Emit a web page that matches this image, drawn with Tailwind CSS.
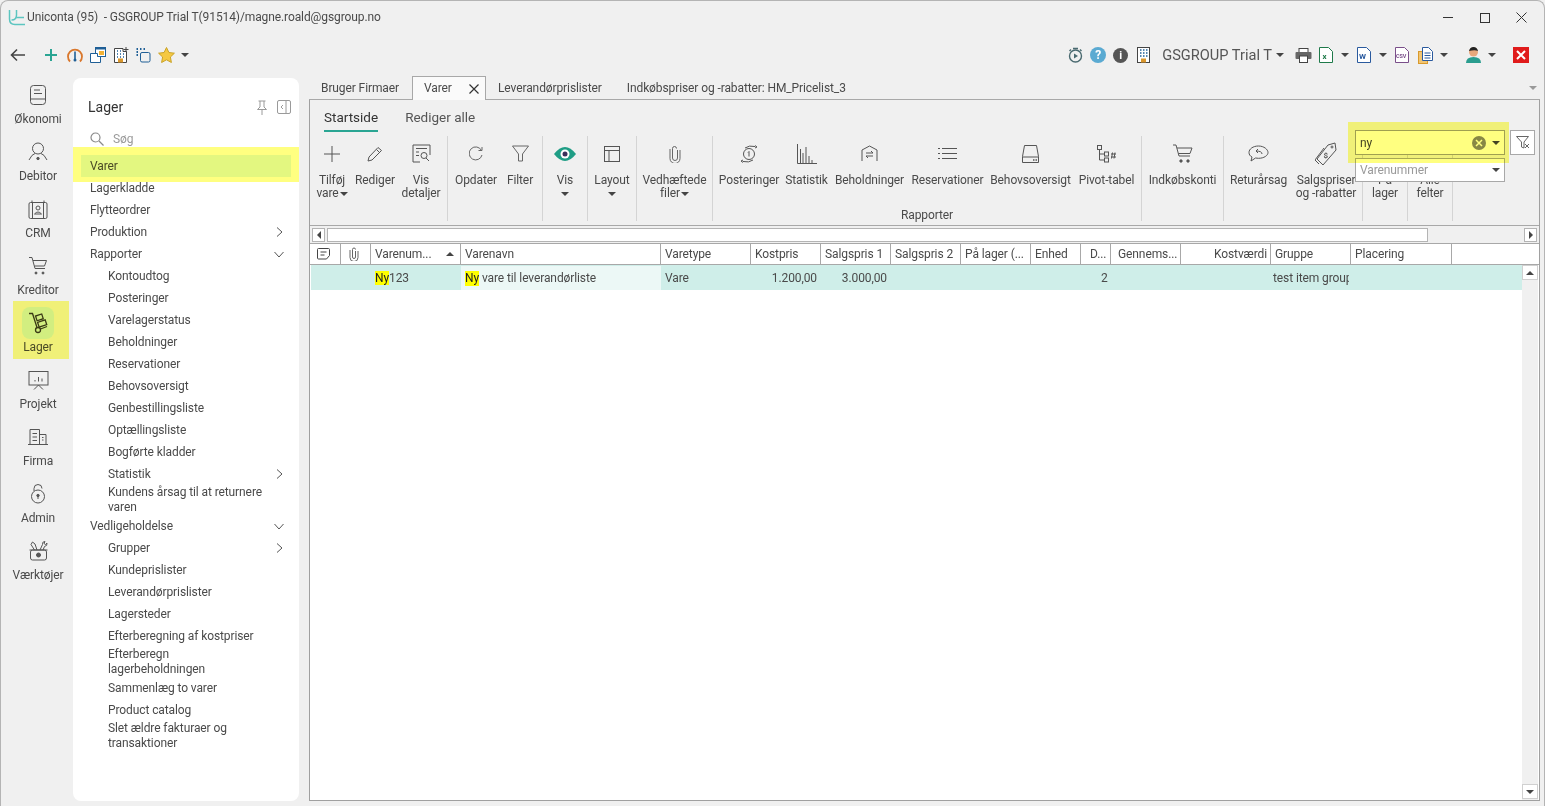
<!DOCTYPE html>
<html lang="en">
<head>
<meta charset="UTF-8" />
<title>Uniconta</title>
<script src="https://cdn.jsdelivr.net/npm/@tailwindcss/browser@4"></script>
</head>
<body class="w-[1545px] h-[806px] overflow-hidden bg-[#f0f0f0] text-[#4a4a4a] text-[12px] leading-[15px] tracking-[-0.1px] font-['Roboto',sans-serif]">
<div class="relative w-full h-full flex flex-col border-t border-l border-r border-[#b4b4b4] rounded-t-[8px]">

  <!-- title bar -->
  <div class="h-[33px] flex items-center pl-[7px] shrink-0">
    <svg width="17" height="17" viewBox="0 0 17 17" fill="none" stroke="#5cc5c0" stroke-width="1.500"><path d="M1.500 1v9q0 5.500 5.500 5.500h10"/><path d="M3.500 11q5 0 5-5V1"/><path d="M8.500 8.500H16"/></svg>
    <span class="ml-[2px]">Uniconta (95)&nbsp; - GSGROUP Trial T(91514)/magne.roald@gsgroup.no</span>
    <div class="ml-auto flex items-center">
      <span class="w-[10px] h-px bg-[#333] mr-[27px]"></span>
      <span class="w-[10px] h-[10px] border border-[#333] mr-[26px]"></span>
      <svg width="11" height="11" viewBox="0 0 11 11" stroke="#333" class="mr-[17px]"><path d="M.5.5l10 10M10.500.5l-10 10"/></svg>
    </div>
  </div>

  <!-- toolbar -->
  <div class="h-[44px] pb-[2px] flex items-center shrink-0">
    <svg width="16" height="14" viewBox="0 0 16 14" fill="none" stroke="#444" stroke-width="1.600" class="ml-[9px]"><path d="M15 7H2M7 1.500L1.500 7 7 12.500"/></svg>
    <svg width="12" height="12" viewBox="0 0 12 12" stroke="#2aa593" stroke-width="2" class="ml-[19px]"><path d="M6 0v12M0 6h12"/></svg>
    <svg width="16" height="16" viewBox="0 0 16 16" fill="none" class="ml-[10px]"><path d="M3 14.500A7 7 0 1 1 13 14.500" stroke="#d9772c" stroke-width="1.800"/><path d="M8 4.500v8" stroke="#1f5f96" stroke-width="1.600"/><circle cx="8" cy="13" r="1.500" fill="#1f5f96"/></svg>
    <svg width="16" height="16" viewBox="0 0 16 16" class="ml-[7px]"><rect x="5.500" y=".5" width="10" height="9" fill="#fff" stroke="#1f5f96"/><rect x="5.500" y=".5" width="10" height="2" fill="#1f5f96"/><rect x="9" y="4" width="5" height="4" fill="#f2b134"/><path d="M.5 6.500h7v3h3v6H.5z" fill="#fff" stroke="#1f5f96"/></svg>
    <svg width="15" height="16" viewBox="0 0 15 16" class="ml-[8px]"><path d="M.5 1.500h8.500v3h3.500v11H.5z" fill="#fff" stroke="#444"/><path d="M3 4h1M6 4h1M3 7h1M6 7h1M9 7h1M3 10h1M6 10h1M9 10h1" stroke="#1f5f96" stroke-width="1.500"/><rect x="4" y="11.500" width="5" height="4" fill="#d9962c"/><path d="M12 0v5M9.500 2.500h5" stroke="#444"/></svg>
    <svg width="15" height="15" viewBox="0 0 15 15" fill="none" stroke="#1f5f96" class="ml-[7px]"><path d="M.5 1h1.500M.5 4h1.500M.5 7h1.500M4 1h1.500M7.500 1h1.500" stroke-width="1.800"/><rect x="4.500" y="4.500" width="9.500" height="9.500" rx="1.500"/></svg>
    <svg width="17" height="16" viewBox="0 0 17 16" class="ml-[7px]"><path d="M8.500 .5l2.400 5 5.500.7-4 3.800 1 5.500-4.900-2.700-4.900 2.700 1-5.500-4-3.800 5.500-.7z" fill="#f5c842" stroke="#c9a227"/></svg>
    <span class="ml-[6px] border-x-[4px] border-t-[4px] border-x-transparent border-t-[#444]"></span>

    <div class="ml-auto flex items-center">
      <svg width="15" height="16" viewBox="0 0 15 16" fill="none" stroke="#4a6a70" stroke-width="1.400"><circle cx="7.500" cy="9" r="6"/><path d="M5 1.500h5M1.500 4L3 2.500M13.500 4L12 2.500"/><path d="M6 6.500v5l4-2.500z" fill="#4a6a70" stroke="none"/></svg>
      <span class="ml-[7px] w-[16px] h-[16px] rounded-full bg-[#5aaad2] text-white font-bold text-[12px] flex items-center justify-center">?</span>
      <span class="ml-[7px] w-[15px] h-[15px] rounded-full bg-[#555] text-white font-bold text-[11px] flex items-center justify-center">i</span>
      <svg width="14" height="16" viewBox="0 0 14 16" class="ml-[9px]"><rect x=".5" y=".5" width="12" height="15" fill="#fff" stroke="#444"/><path d="M3 3h1.500M6 3h1.500M9 3h1.500M3 6h1.500M6 6h1.500M9 6h1.500M3 9h1.500M6 9h1.500M9 9h1.500" stroke="#1f5f96" stroke-width="1.500"/><rect x="4" y="11.500" width="5" height="4" fill="#d9962c"/></svg>
      <span class="ml-[11px] text-[14.6px] tracking-normal text-[#555]">GSGROUP Trial T</span>
      <span class="ml-[4px] border-x-[4px] border-t-[4px] border-x-transparent border-t-[#444]"></span>
      <svg width="17" height="15" viewBox="0 0 17 15" class="ml-[11px]"><rect x="4" y=".5" width="9" height="4" fill="#fff" stroke="#444"/><rect x=".5" y="4" width="16" height="7" rx="1" fill="#666"/><rect x="4.500" y="8" width="8" height="6.500" fill="#fff" stroke="#444"/></svg>
      <svg width="14" height="16" viewBox="0 0 14 16" class="ml-[7px]"><path d="M.5.500h9l4 4v11H.5z" fill="#fff" stroke="#1f7a4a"/><text x="3.500" y="12" font-size="8" font-weight="700" fill="#1f7a4a">x</text></svg>
      <span class="ml-[8px] border-x-[4px] border-t-[4px] border-x-transparent border-t-[#444]"></span>
      <svg width="14" height="16" viewBox="0 0 14 16" class="ml-[8px]"><path d="M.5.500h9l4 4v11H.5z" fill="#fff" stroke="#2a5a9e"/><text x="2" y="12" font-size="8" font-weight="700" fill="#2a5a9e">W</text></svg>
      <span class="ml-[8px] border-x-[4px] border-t-[4px] border-x-transparent border-t-[#444]"></span>
      <svg width="14" height="16" viewBox="0 0 14 16" class="ml-[8px]"><path d="M.5.500h9l4 4v11H.5z" fill="#fff" stroke="#7a4f8a"/><text x="1" y="11" font-size="5.500" font-weight="700" fill="#7a4f8a">CSV</text></svg>
      <svg width="15" height="17" viewBox="0 0 15 17" class="ml-[9px]"><rect x=".5" y="4.500" width="9" height="12" fill="#f2c572" stroke="#d99a2c"/><path d="M4.500.5h6l4 4v9h-10z" fill="#fff" stroke="#2a5a9e"/><path d="M6.500 6h6M6.500 8.500h6M6.500 11h6" stroke="#2a5a9e"/></svg>
      <span class="ml-[7px] border-x-[4px] border-t-[4px] border-x-transparent border-t-[#444]"></span>
      <svg width="15" height="16" viewBox="0 0 15 16" class="ml-[18px]"><path d="M0 16q0-6 7.500-6t7.500 6z" fill="#2a9d8f"/><circle cx="7.500" cy="5" r="4.500" fill="#e8a87c"/><path d="M3 4q1-4 4.500-4T12 4q-3-1.500-9 0z" fill="#222"/></svg>
      <span class="ml-[7px] border-x-[4px] border-t-[4px] border-x-transparent border-t-[#444]"></span>
      <span class="ml-[17px] mr-[15px] w-[16px] h-[16px] bg-[#e01b1b] flex items-center justify-center">
        <svg width="10" height="10" viewBox="0 0 10 10" stroke="#fff" stroke-width="2"><path d="M1 1l8 8M9 1l-8 8"/></svg>
      </span>
    </div>
  </div>

  <!-- main -->
  <div class="flex-1 flex min-h-0">
    <!-- rail -->
    <div class="w-[72px] shrink-0 pt-[3px] pl-[2px] flex flex-col text-[12px] text-[#4a4a4a]">
      <div class="h-[57px] flex flex-col items-center">
        <div class="h-[28px] flex items-center"><svg width="18" height="20" viewBox="0 0 18 20" fill="none" stroke="#555"><rect x="1.500" y=".5" width="15" height="19" rx="3"/><path d="M1.500 14h15M5 5h6M5 8.500h8"/></svg></div>
        <div class="leading-[20px]">Økonomi</div>
      </div>
      <div class="h-[57px] flex flex-col items-center">
        <div class="h-[28px] flex items-center"><svg width="20" height="20" viewBox="0 0 20 20" fill="none" stroke="#555"><circle cx="10" cy="6.500" r="5.500"/><path d="M1 18q3-6 6-6.500M19 18q-3-6-6-6.500"/><circle cx="10" cy="16.500" r="1.200" fill="#555"/></svg></div>
        <div class="leading-[20px]">Debitor</div>
      </div>
      <div class="h-[57px] flex flex-col items-center">
        <div class="h-[28px] flex items-center"><svg width="20" height="19" viewBox="0 0 20 19" fill="none" stroke="#555"><rect x="1" y="2.500" width="18" height="16" rx="1.500"/><path d="M4 2.500v-2M16 2.500v-2M4.500 2.500v16M15.500 2.500v16"/><circle cx="10" cy="8" r="2"/><path d="M6.500 14q3.500-4 7 0z"/></svg></div>
        <div class="leading-[20px]">CRM</div>
      </div>
      <div class="h-[57px] flex flex-col items-center">
        <div class="h-[28px] flex items-center"><svg width="20" height="20" viewBox="0 0 20 20" fill="none" stroke="#555"><path d="M1 1.500h3l3 11h10"/><path d="M5 4.500h13.500l-2 5.500H6.500"/><circle cx="8" cy="17" r="1" fill="#555"/><circle cx="15" cy="17" r="1" fill="#555"/></svg></div>
        <div class="leading-[20px]">Kreditor</div>
      </div>
      <div class="h-[57px] flex flex-col items-center relative">
        <div class="absolute top-[-2px] left-[19px] w-[32px] h-[32px] rounded-[8px] bg-[#d2eeff]"></div>
        <div class="relative h-[28px] flex items-center"><svg width="20" height="22" viewBox="0 0 20 22" fill="none" stroke="#3a3a2a" stroke-width="1.300"><path d="M1 1.500h3.500l4.500 14"/><circle cx="10" cy="18" r="2.500"/><path d="M12.500 17l6.500-2.500"/><rect x="8" y="3" width="6.500" height="5" transform="rotate(-18 11 5)"/><rect x="10" y="9" width="8" height="5" transform="rotate(-18 14 11)"/></svg></div>
        <div class="relative leading-[20px]">Lager</div>
      </div>
      <div class="h-[57px] flex flex-col items-center">
        <div class="h-[28px] flex items-center"><svg width="21" height="19" viewBox="0 0 21 19" fill="none" stroke="#555"><rect x="1" y=".5" width="19" height="13.500"/><path d="M7 10.500V9M10.500 10.500V6M14 10.500V7.500M6 18.500l4.500-4.500 4.500 4.500"/></svg></div>
        <div class="leading-[20px]">Projekt</div>
      </div>
      <div class="h-[57px] flex flex-col items-center">
        <div class="h-[28px] flex items-center"><svg width="20" height="16" viewBox="0 0 20 16" fill="none" stroke="#555"><path d="M0 15.500h20M2 15.500V.5h9.500v15M11.500 5.500h6.500v10M4.500 4.500h4.500M4.500 8h4.500M4.500 11.500h4.500M14 8.500h1.500M14 11h1.500"/></svg></div>
        <div class="leading-[20px]">Firma</div>
      </div>
      <div class="h-[57px] flex flex-col items-center">
        <div class="h-[28px] flex items-center"><svg width="14" height="20" viewBox="0 0 14 20" fill="none" stroke="#555"><path d="M3 7V4.500a4 4 0 0 1 8 0"/><circle cx="7" cy="12.500" r="6.500"/><circle cx="7" cy="11.500" r="1.200" fill="#555"/><path d="M7 12v3"/></svg></div>
        <div class="leading-[20px]">Admin</div>
      </div>
      <div class="h-[57px] flex flex-col items-center">
        <div class="h-[28px] flex items-center"><svg width="19" height="20" viewBox="0 0 19 20" fill="none" stroke="#555"><rect x="1.500" y="9" width="16" height="10" rx="2"/><circle cx="9.500" cy="14" r="2" fill="#555"/><path d="M.5 9h18"/><path d="M5.500 9L2 3.500 3.500 1 6 3l2 6"/><path d="M11 9l2.500-5.500q-.5-3 2.500-3l-1 2 1.500 1 1.500-1.500q.5 3-2.500 3.500L14 9"/></svg></div>
        <div class="leading-[20px]">Værktøjer</div>
      </div>
    </div>

    <!-- sidebar -->
    <div class="w-[226px] shrink-0 bg-white rounded-[8px] mb-[5px] relative text-[#4a4a4a]">
      <div class="h-[52px] flex items-center pl-[15px] pr-[8px] pt-[6px]">
        <span class="text-[14px] tracking-normal text-[#333]">Lager</span>
        <svg width="14" height="15" viewBox="0 0 14 15" fill="none" stroke="#9a9a9a" class="ml-auto"><path d="M3.500 1h7M5 1v6L2.500 9.500h9L9 7V1M7 9.500V15"/></svg>
        <svg width="14" height="14" viewBox="0 0 14 14" fill="none" stroke="#9a9a9a" class="ml-[8px]"><rect x=".5" y=".5" width="13" height="13" rx="1.500"/><path d="M9 .5v13M6 5L4 7l2 2"/></svg>
      </div>
      <div class="h-[18px] flex items-center pl-[17px] text-[#9a9a9a]">
        <svg width="14" height="14" viewBox="0 0 14 14" fill="none" stroke="#8a8a8a" stroke-width="1.200"><circle cx="5.500" cy="5.500" r="4.500"/><path d="M9 9l4.500 4.500"/></svg>
        <span class="ml-[9px]">Søg</span>
      </div>
      <div class="mt-[7px]">
        <div class="h-[22px] mx-[8px] pl-[9px] flex items-center bg-[#e3f7ff]">Varer</div>
      </div>
      <div class="pl-[17px] pr-[16px]">
        <div class="h-[22px] flex items-center">Lagerkladde</div>
        <div class="h-[22px] flex items-center">Flytteordrer</div>
        <div class="h-[22px] flex items-center justify-between">Produktion<svg width="7" height="10" viewBox="0 0 7 10" fill="none" stroke="#555"><path d="M1 .5l5 4.500-5 4.500"/></svg></div>
        <div class="h-[22px] flex items-center justify-between">Rapporter<svg width="10" height="7" viewBox="0 0 10 7" fill="none" stroke="#555" class="-mr-[1px]"><path d="M.5 1l4.500 5 4.500-5"/></svg></div>
        <div class="pl-[18px]">
          <div class="h-[22px] flex items-center">Kontoudtog</div>
          <div class="h-[22px] flex items-center">Posteringer</div>
          <div class="h-[22px] flex items-center">Varelagerstatus</div>
          <div class="h-[22px] flex items-center">Beholdninger</div>
          <div class="h-[22px] flex items-center">Reservationer</div>
          <div class="h-[22px] flex items-center">Behovsoversigt</div>
          <div class="h-[22px] flex items-center">Genbestillingsliste</div>
          <div class="h-[22px] flex items-center">Optællingsliste</div>
          <div class="h-[22px] flex items-center">Bogførte kladder</div>
          <div class="h-[14px] mt-[4px] mb-[4px] flex items-center justify-between">Statistik<svg width="7" height="10" viewBox="0 0 7 10" fill="none" stroke="#555"><path d="M1 .5l5 4.500-5 4.500"/></svg></div>
          <div class="h-[30px] flex items-center pr-[14px]">Kundens årsag til at returnere varen</div>
        </div>
        <div class="h-[22px] flex items-center justify-between">Vedligeholdelse<svg width="10" height="7" viewBox="0 0 10 7" fill="none" stroke="#555" class="-mr-[1px]"><path d="M.5 1l4.500 5 4.500-5"/></svg></div>
        <div class="pl-[18px]">
          <div class="h-[22px] flex items-center justify-between">Grupper<svg width="7" height="10" viewBox="0 0 7 10" fill="none" stroke="#555"><path d="M1 .5l5 4.500-5 4.500"/></svg></div>
          <div class="h-[22px] flex items-center">Kundeprislister</div>
          <div class="h-[22px] flex items-center">Leverandørprislister</div>
          <div class="h-[22px] flex items-center">Lagersteder</div>
          <div class="h-[22px] flex items-center">Efterberegning af kostpriser</div>
          <div class="h-[30px] flex items-center pr-[50px]">Efterberegn lagerbeholdningen</div>
          <div class="h-[22px] flex items-center">Sammenlæg to varer</div>
          <div class="h-[22px] flex items-center">Product catalog</div>
          <div class="h-[30px] flex items-center pr-[30px]">Slet ældre fakturaer og transaktioner</div>
        </div>
      </div>
    </div>

    <!-- content -->
    <div class="flex-1 min-w-0 ml-[10px] mr-[4px] -mt-[2px] mb-[5px] flex flex-col">
      <!-- tabs -->
      <div class="h-[24px] shrink-0 flex items-center border-b border-[#a8a8a8] relative pt-[1px]">
        <span class="ml-[12px] w-[91px]">Bruger Firmaer</span>
        <div class="w-[74px] h-[24px] mb-[-1px] -mt-[1px] bg-[#fafafa] border border-b-0 border-[#a8a8a8] flex items-center pl-[11px] relative">
          Varer
          <svg width="10" height="10" viewBox="0 0 10 10" stroke="#333" stroke-width="1.200" class="ml-auto mr-[6px]"><path d="M.5.500l9 9M9.500.500l-9 9"/></svg>
        </div>
        <span class="ml-[12px]">Leverandørprislister</span>
        <span class="ml-[25px]">Indkøbspriser og -rabatter: HM_Pricelist_3</span>
        <span class="ml-auto mr-[3px] border-x-[4px] border-t-[4px] border-x-transparent border-t-[#999]"></span>
      </div>

      <!-- panel -->
      <div class="flex-1 min-h-0 border-l border-r border-b border-[#a0a0a0] flex flex-col">
        <!-- ribbon -->
        <div class="h-[126px] shrink-0 relative border-b border-[#a8a8a8]">
          <div class="flex h-[32px] pl-[14px] pt-[10px] text-[13.5px] tracking-normal">
            <div class="h-[22px] border-b-2 border-[#2aa593] text-[#333]">Startside</div>
            <div class="ml-[27px] text-[#555]">Rediger alle</div>
          </div>
          <div class="flex h-[85px] mt-[4px] text-center leading-[13px] [&>div]:pt-[4px]">
            <!-- group 1 -->
            <div class="flex border-r border-[#d4d4d4] w-[138px] pl-[4px]">
              <div class="w-[36px]"><div class="h-[27px] flex items-center justify-center"><svg width="18" height="18" viewBox="0 0 18 18" stroke="#555"><path d="M9 1v16M1 9h16"/></svg></div><div class="mt-[7px]">Tilføj</div><div class="flex items-center justify-center">vare<span class="ml-[1px] border-x-[4px] border-t-[4px] border-x-transparent border-t-[#444]"></span></div></div>
              <div class="w-[50px]"><div class="h-[27px] flex items-center justify-center"><svg width="16" height="16" viewBox="0 0 16 16" fill="none" stroke="#555"><path d="M1 15l1-4L11 1.500l3.500 3L5 14z"/><path d="M9.500 3.500l3 3"/></svg></div><div class="mt-[7px]">Rediger</div></div>
              <div class="w-[42px]"><div class="h-[27px] flex items-center justify-center"><svg width="19" height="19" viewBox="0 0 19 19" fill="none" stroke="#555"><path d="M8 18H1V1h17v10"/><path d="M4 4.500h11M4 8h3M4 11.500h3"/><circle cx="12" cy="11.500" r="3"/><path d="M14 14l3 3"/></svg></div><div class="mt-[7px]">Vis</div><div>detaljer</div></div>
            </div>
            <!-- group 2 -->
            <div class="flex border-r border-[#d4d4d4] w-[95px] pl-[5px]">
              <div class="w-[46px]"><div class="h-[27px] flex items-center justify-center"><svg width="14" height="15" viewBox="0 0 14 15" fill="none" stroke="#666"><path d="M12.500 4.500A6.500 6.500 0 1 0 13 9"/><path d="M9.500 4.500h3.500V1"/></svg></div><div class="mt-[7px]">Opdater</div></div>
              <div class="w-[42px]"><div class="h-[27px] flex items-center justify-center"><svg width="17" height="17" viewBox="0 0 17 17" fill="none" stroke="#666"><path d="M.5 1h16L10.500 9v7h-4V9z"/></svg></div><div class="mt-[7px]">Filter</div></div>
            </div>
            <!-- vis -->
            <div class="border-r border-[#d4d4d4] w-[45px]"><div class="h-[27px] flex items-center justify-center"><svg width="22" height="14" viewBox="0 0 22 14"><path d="M0 7q11-14 22 0-11 14-22 0z" fill="#1f9d85"/><circle cx="11" cy="7" r="4.500" fill="#fff"/><circle cx="11" cy="7" r="2.500" fill="#3a2f5a"/></svg></div><div class="mt-[7px]">Vis</div><div class="flex justify-center pt-[5px]"><span class="border-x-[4px] border-t-[4px] border-x-transparent border-t-[#444]"></span></div></div>
            <!-- layout -->
            <div class="border-r border-[#d4d4d4] w-[49px]"><div class="h-[27px] flex items-center justify-center"><svg width="16" height="16" viewBox="0 0 16 16" fill="none" stroke="#555"><rect x=".5" y=".5" width="15" height="15"/><path d="M.5 4.500h15M5 4.500v11"/></svg></div><div class="mt-[7px]">Layout</div><div class="flex justify-center pt-[5px]"><span class="border-x-[4px] border-t-[4px] border-x-transparent border-t-[#444]"></span></div></div>
            <!-- attachments -->
            <div class="border-r border-[#d4d4d4] w-[76px]"><div class="h-[27px] flex items-center justify-center"><svg width="12" height="18" viewBox="0 0 12 18" fill="none" stroke="#666"><path d="M8.500 5v8a2.500 2.500 0 0 1-5 0V3.500a2 2 0 0 1 4 0"/><path d="M11 5v8.500a5 5 0 0 1-10 0V4"/></svg></div><div class="mt-[7px]">Vedhæftede</div><div class="flex items-center justify-center">filer<span class="ml-[1px] border-x-[4px] border-t-[4px] border-x-transparent border-t-[#444]"></span></div></div>
            <!-- rapporter -->
            <div class="relative flex border-r border-[#d4d4d4] w-[429px] pl-[3px]">
              <div class="w-[66px]"><div class="h-[27px] flex items-center justify-center"><svg width="18" height="18" viewBox="0 0 18 18" fill="none" stroke="#555"><circle cx="9" cy="9" r="5.500"/><path d="M9 6.500v5M8 7.500l1-1" /><path d="M5 3q4-3 10-1.500M15 .5l2 1.500-2 1M13 15q-4 3-10 1.500M3 17.500L1 16l2-1"/></svg></div><div class="mt-[7px] whitespace-nowrap">Posteringer</div></div>
              <div class="w-[49px]"><div class="h-[27px] flex items-center justify-center"><svg width="20" height="20" viewBox="0 0 20 20" fill="none" stroke="#555"><path d="M.5 0v19.500h19.500M3.500 19V5M6 19V9M9 19V3M12 19v-7M15 19v-3"/></svg></div><div class="mt-[7px]">Statistik</div></div>
              <div class="w-[77px]"><div class="h-[27px] flex items-center justify-center"><svg width="17" height="17" viewBox="0 0 17 17" fill="none" stroke="#555"><path d="M1 16V5l7.500-4L16 5v11"/><path d="M5 8h7l-2-2M12 11H5l2 2"/></svg></div><div class="mt-[7px]">Beholdninger</div></div>
              <div class="w-[79px]"><div class="h-[27px] flex items-center justify-center"><svg width="19" height="13" viewBox="0 0 19 13" fill="none" stroke="#555"><path d="M0 1.500h2M4 1.500h15M0 6.500h2M4 6.500h15M0 11.500h2M4 11.500h15"/></svg></div><div class="mt-[7px]">Reservationer</div></div>
              <div class="w-[87px]"><div class="h-[27px] flex items-center justify-center"><svg width="17" height="18" viewBox="0 0 17 18" fill="none" stroke="#555"><path d="M2.500.5h12l2 11v6H.5v-6zM.5 12h16"/><path d="M11 15h1.500M13.500 15H15" stroke-width="1.500"/></svg></div><div class="mt-[7px]">Behovsoversigt</div></div>
              <div class="w-[65px]"><div class="h-[27px] flex items-center justify-center"><svg width="20" height="18" viewBox="0 0 20 18" fill="none" stroke="#555"><rect x=".5" y=".5" width="4" height="4"/><rect x="7.500" y="7" width="4" height="4"/><rect x="7.500" y="13" width="4" height="4"/><path d="M2.500 4.500V15h5M2.500 9h5M14 9h5M14 12h5M15.500 7.500l-1 6M18 7.500l-1 6"/></svg></div><div class="mt-[7px] whitespace-nowrap">Pivot-tabel</div></div>
              <div class="absolute left-0 right-0 top-[72px] leading-[15px]">Rapporter</div>
            </div>
            <!-- indkob -->
            <div class="border-r border-[#d4d4d4] w-[82px]"><div class="h-[27px] flex items-center justify-center"><svg width="20" height="20" viewBox="0 0 20 20" fill="none" stroke="#555"><path d="M0 1h3l3 11h11"/><path d="M4 4h15l-2 5.500H5.500"/><circle cx="8" cy="17" r="1.200" fill="#555"/><circle cx="15" cy="17" r="1.200" fill="#555"/></svg></div><div class="mt-[7px]">Indkøbskonti</div></div>
            <!-- retur -->
            <div class="flex border-r border-[#d4d4d4] w-[139px]">
              <div class="w-[69px]"><div class="h-[27px] flex items-center justify-center"><svg width="21" height="18" viewBox="0 0 21 18" fill="none" stroke="#555"><path d="M10.500 1C5 1 1 4 1 7.500c0 2 1 3.500 3 4.500l-1 4 4.500-3c1 .2 2 .3 3 .3 5.500 0 9.500-2.800 9.500-5.800S16 1 10.500 1z"/><path d="M14 9q0-3-6-3M10 4L8 6l2 2"/></svg></div><div class="mt-[7px]">Returårsag</div></div>
              <div class="w-[66px] whitespace-nowrap"><div class="h-[27px] flex items-center justify-center"><svg width="22" height="24" viewBox="0 0 22 24" fill="none" stroke="#555"><path d="M8 23L2 17 13 3l7-2 1 7z"/><path d="M4 22L0 18 9 6"/><circle cx="17" cy="5" r="1"/><text x="8.500" y="16" font-size="8" fill="#555" stroke="none" font-weight="700">$</text></svg></div><div class="mt-[7px]">Salgspriser</div><div>og -rabatter</div></div>
            </div>
            <div class="border-r border-[#d4d4d4] w-[45px]"><div class="h-[27px]"></div><div class="mt-[7px]">På</div><div>lager</div></div>
            <div class="border-r border-[#d4d4d4] w-[45px]"><div class="h-[27px]"></div><div class="mt-[7px]">Alle</div><div>felter</div></div>
          </div>

          <!-- search box floats over the ribbon -->
          <div class="absolute left-[1045px] top-[30px] w-[150px] h-[25px] bg-white border border-[#a0a0a0] flex items-center pl-[4px] pr-[4px] pt-[1px] text-[12px]">
            <span class="text-[#444]">ny</span>
            <span class="ml-auto w-[14px] h-[14px] rounded-full bg-[#888] flex items-center justify-center"><svg width="8" height="8" viewBox="0 0 8 8" stroke="#fff" stroke-width="1.500"><path d="M1 1l6 6M7 1L1 7"/></svg></span>
            <span class="ml-[6px] border-x-[4px] border-t-[4px] border-x-transparent border-t-[#444]"></span>
          </div>
          <div class="absolute left-[1045px] top-[58px] w-[150px] h-[24px] bg-white border border-[#a8a8a8] flex items-center pl-[4px] pr-[4px] text-[#9a9a9a]">
            Varenummer
            <span class="ml-auto border-x-[4px] border-t-[4px] border-x-transparent border-t-[#444]"></span>
          </div>
          <div class="absolute left-[1200px] top-[30px] w-[25px] h-[25px] bg-white border border-[#a8a8a8] flex items-center justify-center">
            <svg width="14" height="13" viewBox="0 0 14 13" fill="none" stroke="#666"><path d="M.5.500h12L8 6v6L5.500 11V6z"/><path d="M9 8l4 4M13 8l-4 4"/></svg>
          </div>
        </div>

        <!-- horizontal scroll -->
        <div class="h-[17px] shrink-0 flex items-center border-b border-[#a8a8a8] pl-[2px] pr-[2px] mt-[1px]">
          <div class="w-[13px] h-[14px] bg-white border border-[#b4b4b4] flex items-center justify-center"><span class="border-y-[4px] border-r-[4px] border-y-transparent border-r-[#444]"></span></div>
          <div class="ml-[2px] w-[1101px] h-[14px] bg-white border border-[#b4b4b4]"></div>
          <div class="ml-auto w-[13px] h-[14px] bg-white border border-[#b4b4b4] flex items-center justify-center"><span class="border-y-[4px] border-l-[4px] border-y-transparent border-l-[#444]"></span></div>
        </div>

        <!-- grid header -->
        <div class="h-[21px] shrink-0 flex pl-[1px] bg-white border-b border-[#a8a8a8] text-[#4a4a4a]">
          <div class="w-[30px] border-r border-[#a8a8a8] flex items-center justify-center pr-[4px]"><svg width="13" height="12" viewBox="0 0 13 12" fill="none" stroke="#444"><path d="M1.500.5h10a1 1 0 0 1 1 1v6l-3 3.500h-8a1 1 0 0 1-1-1v-8.500a1 1 0 0 1 1-1zM3.500 4h6M3.500 7h4"/></svg></div>
          <div class="w-[30px] border-r border-[#a8a8a8] flex items-center justify-center pr-[4px]"><svg width="10" height="14" viewBox="0 0 10 14" fill="none" stroke="#666"><path d="M6.500 4v6a1.500 1.500 0 0 1-3 0V2.500a1.500 1.500 0 0 1 3 0M9 4v6.500a4 4 0 0 1-8 0V3"/></svg></div>
          <div class="w-[90px] border-r border-[#a8a8a8] flex items-center pl-[4px]">Varenum...<span class="ml-auto mr-[6px] border-x-[4px] border-b-[4px] border-x-transparent border-b-[#444]"></span></div>
          <div class="w-[200px] border-r border-[#a8a8a8] flex items-center pl-[4px]">Varenavn</div>
          <div class="w-[90px] border-r border-[#a8a8a8] flex items-center pl-[4px]">Varetype</div>
          <div class="w-[70px] border-r border-[#a8a8a8] flex items-center pl-[4px]">Kostpris</div>
          <div class="w-[70px] border-r border-[#a8a8a8] flex items-center pl-[4px]">Salgspris 1</div>
          <div class="w-[70px] border-r border-[#a8a8a8] flex items-center pl-[4px]">Salgspris 2</div>
          <div class="w-[70px] border-r border-[#a8a8a8] flex items-center pl-[4px]">På lager (...</div>
          <div class="w-[50px] border-r border-[#a8a8a8] flex items-center pl-[4px]">Enhed</div>
          <div class="w-[30px] border-r border-[#a8a8a8] flex items-center pl-[9px]">D...</div>
          <div class="w-[70px] border-r border-[#a8a8a8] flex items-center pl-[7px]">Gennems...</div>
          <div class="w-[90px] border-r border-[#a8a8a8] flex items-center justify-end pr-[3px]">Kostværdi</div>
          <div class="w-[80px] border-r border-[#a8a8a8] flex items-center pl-[4px]">Gruppe</div>
          <div class="w-[101px] border-r border-[#a8a8a8] flex items-center pl-[4px]">Placering</div>
        </div>

        <!-- grid body -->
        <div class="flex-1 min-h-0 flex bg-white pl-[1px]">
          <div class="flex-1 min-w-0">
            <div class="h-[25px] flex bg-[#cfeee9] items-center pt-[1px]">
              <div class="w-[60px]"></div>
              <div class="w-[90px] pl-[4px]"><span class="bg-[#ffff00] text-[#222]">Ny</span>123</div>
              <div class="w-[200px] pl-[4px] h-full flex items-center bg-[#ecf8f6]"><span class="bg-[#ffff00] text-[#222]">Ny</span>&nbsp;vare til leverandørliste</div>
              <div class="w-[90px] pl-[4px]">Vare</div>
              <div class="w-[70px] text-right pr-[4px]">1.200,00</div>
              <div class="w-[70px] text-right pr-[4px]">3.000,00</div>
              <div class="w-[70px]"></div>
              <div class="w-[70px]"></div>
              <div class="w-[50px]"></div>
              <div class="w-[30px] pl-[20px]">2</div>
              <div class="w-[70px]"></div>
              <div class="w-[90px]"></div>
              <div class="w-[78px] pl-[2px] overflow-hidden whitespace-nowrap">test item group</div>
            </div>
          </div>
          <!-- vertical scroll -->
          <div class="w-[16px] shrink-0 bg-[#f0f0f0] flex flex-col justify-between pb-[1px] mr-[1px]">
            <div class="h-[15px] bg-white border border-[#d0d0d0] flex items-center justify-center"><span class="border-x-[4px] border-b-[4px] border-x-transparent border-b-[#444]"></span></div>
            <div class="h-[15px] bg-white border border-[#d0d0d0] flex items-center justify-center"><span class="border-x-[4px] border-t-[4px] border-x-transparent border-t-[#444]"></span></div>
          </div>
        </div>
      </div>
    </div>
  </div>

  <!-- yellow marker highlights drawn on top of the screenshot -->
  <div class="absolute left-[72px] top-[146px] w-[226px] h-[35px] bg-[#ffff80] mix-blend-multiply"></div>
  <div class="absolute left-[12px] top-[300px] w-[56px] h-[58px] bg-[#ffff80] mix-blend-multiply"></div>
  <div class="absolute left-[1347px] top-[121px] w-[161px] h-[41px] bg-[#ffff80] mix-blend-multiply"></div>
</div>
</body>
</html>
